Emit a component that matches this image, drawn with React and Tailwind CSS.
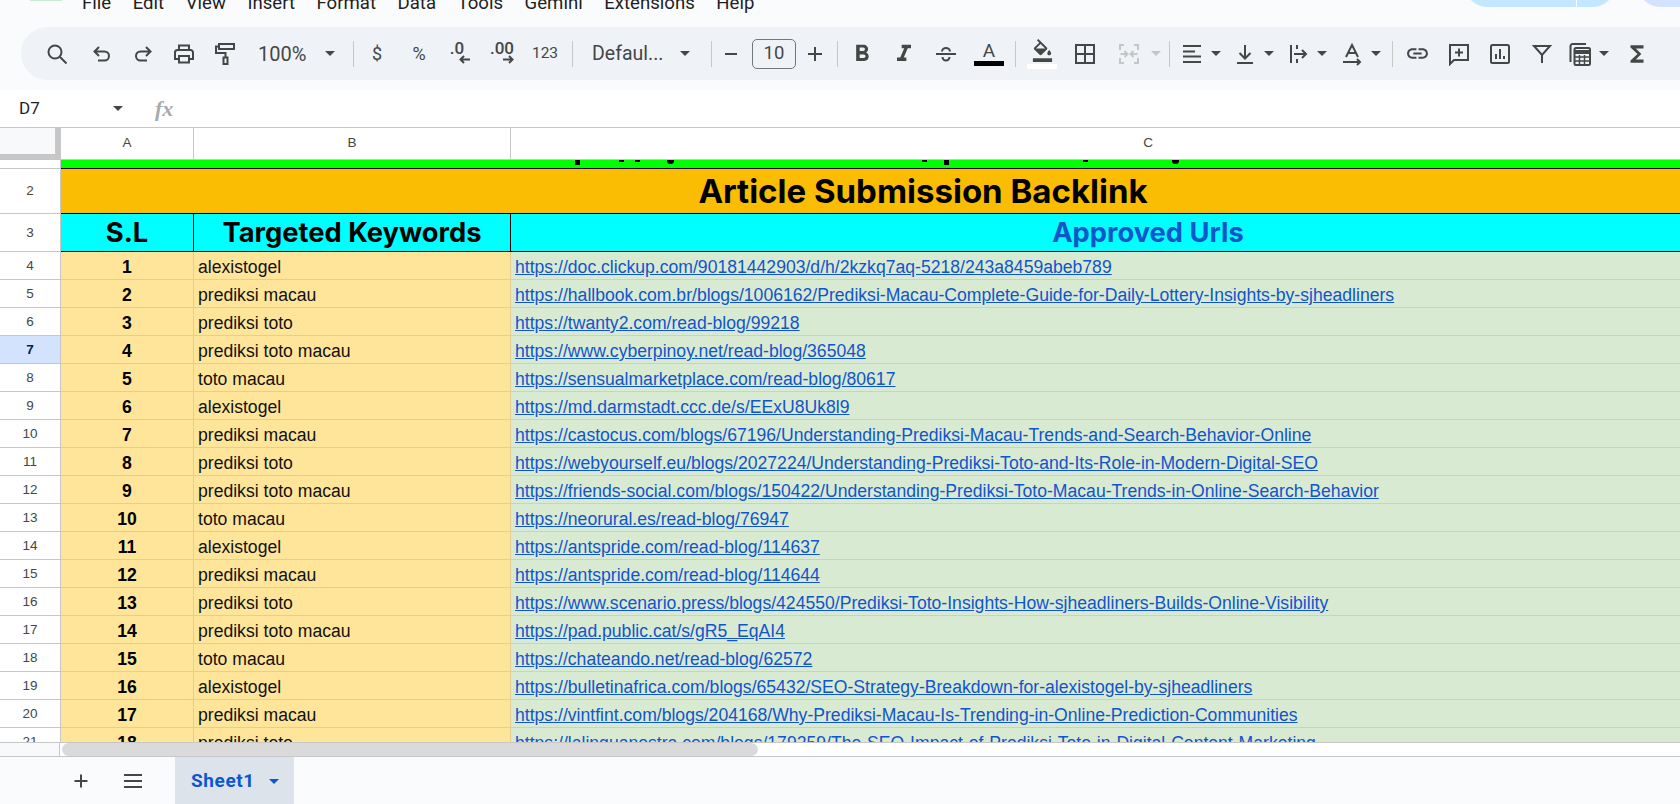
import { MdFormatBold, MdFormatItalic, MdOutlineFormatColorFill, MdLink, MdFunctions } from 'react-icons/md'

const MENU = ['File', 'Edit', 'View', 'Insert', 'Format', 'Data', 'Tools', 'Gemini', 'Extensions', 'Help']

const ROWS = [
  ['alexistogel', 'https://doc.clickup.com/90181442903/d/h/2kzkq7aq-5218/243a8459abeb789'],
  ['prediksi macau', 'https://hallbook.com.br/blogs/1006162/Prediksi-Macau-Complete-Guide-for-Daily-Lottery-Insights-by-sjheadliners'],
  ['prediksi toto', 'https://twanty2.com/read-blog/99218'],
  ['prediksi toto macau', 'https://www.cyberpinoy.net/read-blog/365048'],
  ['toto macau', 'https://sensualmarketplace.com/read-blog/80617'],
  ['alexistogel', 'https://md.darmstadt.ccc.de/s/EExU8Uk8l9'],
  ['prediksi macau', 'https://castocus.com/blogs/67196/Understanding-Prediksi-Macau-Trends-and-Search-Behavior-Online'],
  ['prediksi toto', 'https://webyourself.eu/blogs/2027224/Understanding-Prediksi-Toto-and-Its-Role-in-Modern-Digital-SEO'],
  ['prediksi toto macau', 'https://friends-social.com/blogs/150422/Understanding-Prediksi-Toto-Macau-Trends-in-Online-Search-Behavior'],
  ['toto macau', 'https://neorural.es/read-blog/76947'],
  ['alexistogel', 'https://antspride.com/read-blog/114637'],
  ['prediksi macau', 'https://antspride.com/read-blog/114644'],
  ['prediksi toto', 'https://www.scenario.press/blogs/424550/Prediksi-Toto-Insights-How-sjheadliners-Builds-Online-Visibility'],
  ['prediksi toto macau', 'https://pad.public.cat/s/gR5_EqAI4'],
  ['toto macau', 'https://chateando.net/read-blog/62572'],
  ['alexistogel', 'https://bulletinafrica.com/blogs/65432/SEO-Strategy-Breakdown-for-alexistogel-by-sjheadliners'],
  ['prediksi macau', 'https://vintfint.com/blogs/204168/Why-Prediksi-Macau-Is-Trending-in-Online-Prediction-Communities'],
  ['prediksi toto', 'https://lalinguanostra.com/blogs/179259/The-SEO-Impact-of-Prediksi-Toto-in-Digital-Content-Marketing'],
]

// what is left of row 1's text: the row is scrolled away, only descenders show
const DESCENDERS = [
  'left-[514px] w-[5px] h-[5px]',
  'left-[558px] w-[5px] h-[2px]',
  'left-[574px] w-[5px] h-[2px]',
  'left-[606px] w-[7px] h-[4px] rounded-b-full',
  'left-[861px] w-[5px] h-[2px]',
  'left-[883px] w-[5px] h-[5px]',
  'left-[1022px] w-[5px] h-[2px]',
  'left-[1111px] w-[7px] h-[4px] rounded-b-full',
]

const Ico = ({ children, size = 24, color = '#444746', width = 2 }) => (
  <svg width={size} height={size} viewBox="0 0 24 24" fill="none" stroke={color} strokeWidth={width}>
    {children}
  </svg>
)

const Caret = ({ className = '', color = '#444746' }) => (
  <svg className={`shrink-0 ${className}`} width="10" height="5" viewBox="0 0 10 5" fill={color}>
    <path d="M0 0h10L5 5z" />
  </svg>
)

const Slot = ({ className = '', children }) => (
  <div className={`h-full flex items-center justify-center shrink-0 ${className}`}>{children}</div>
)

const Divider = ({ className = '' }) => <div className={`w-px h-[26px] bg-[#c7c7c7] shrink-0 ${className}`} />

function Toolbar() {
  return (
    <div className="ml-[21px] h-[53px] bg-[#eff3f8] rounded-l-[27px] flex items-center pl-[15px] text-[#444746] font-['Roboto',sans-serif]">
      <Slot className="w-[42px]">
        <Ico><circle cx="10" cy="10" r="6.5" /><path d="M15 15l6.5 6.5" /></Ico>
      </Slot>
      <Slot className="w-[48px]">
        <Ico><path d="M9 5L4.5 9.5 9 14M4.5 9.5h10a4.5 4.5 0 0 1 0 9H8" /></Ico>
      </Slot>
      <Slot className="w-[34px]">
        <Ico><path d="M15 5l4.5 4.5L15 14M19.5 9.5h-10a4.5 4.5 0 0 0 0 9H16" /></Ico>
      </Slot>
      <Slot className="w-[48px]">
        <Ico>
          <path d="M7 8V3.5h10V8M7 17H3V10.5A2.5 2.5 0 0 1 5.5 8h13a2.5 2.5 0 0 1 2.5 2.5V17h-4" />
          <path d="M7 14h10v6.5H7z" />
        </Ico>
      </Slot>
      <Slot className="w-[34px]">
        <Ico><path d="M6 2h15v5H6zM6 4.5H3V11h9.5v4M10.5 15.5h4V22h-4z" /></Ico>
      </Slot>
      <Slot className="w-[111px] !justify-between pl-[16px] pr-[18px] text-[20px]">
        <span>100%</span>
        <Caret />
      </Slot>
      <Divider />
      <Slot className="w-[46px] text-[18px]">$</Slot>
      <Slot className="w-[38px] text-[18px]">%</Slot>
      <Slot className="w-[44px]">
        <div className="flex flex-col items-end -mt-[4px]">
          <span className="text-[17px] leading-[16px] font-medium pr-[6px]">.0</span>
          <svg width="11" height="9" viewBox="0 0 11 9" fill="none" stroke="#444746" strokeWidth="2" className="-mt-[1px]"><path d="M11 4.5H1M5 1L1.5 4.5 5 8" /></svg>
        </div>
      </Slot>
      <Slot className="w-[40px]">
        <div className="flex flex-col items-end -mt-[4px]">
          <span className="text-[17px] leading-[16px] font-medium">.00</span>
          <svg width="11" height="9" viewBox="0 0 11 9" fill="none" stroke="#444746" strokeWidth="2" className="-mt-[1px]"><path d="M0 4.5h10M6 1l3.5 3.5L6 8" /></svg>
        </div>
      </Slot>
      <Slot className="w-[46px] text-[15.5px]">123</Slot>
      <Divider className="ml-[4px]" />
      <Slot className="w-[138px] !justify-between pl-[19px] pr-[21px] text-[19.5px]">
        <span>Defaul...</span>
        <Caret />
      </Slot>
      <Divider />
      <Slot className="w-[38px]"><Ico><path d="M6 12h12" /></Ico></Slot>
      <div className="w-[44px] h-[30px] ml-[2px] shrink-0 rounded-[5px] border border-[#747775] flex items-center justify-center text-[18.5px]">10</div>
      <Slot className="w-[38px]"><Ico><path d="M5 12h14M12 5v14" /></Ico></Slot>
      <Divider className="ml-[3px]" />
      <Slot className="w-[48px]"><MdFormatBold size={28} color="#444746" /></Slot>
      <Slot className="w-[36px]"><MdFormatItalic size={28} color="#444746" /></Slot>
      <Slot className="w-[48px]">
        <Ico><path d="M2 12h20M8 9.5a4 3.5 0 0 1 8 0M8.5 15a3.5 3.5 0 0 0 7 0" /></Ico>
      </Slot>
      <Slot className="w-[38px]">
        <div className="flex flex-col items-center">
          <span className="text-[19px] leading-[19px] h-[20px]">A</span>
          <div className="w-[30px] h-[5px] bg-black" />
        </div>
      </Slot>
      <Divider className="ml-[7px]" />
      <Slot className="w-[52px]">
        <div className="flex flex-col items-center">
          <MdOutlineFormatColorFill size={23} color="#444746" className="mb-[2px]" />
          <div className="w-[30px] h-[5px] bg-white" />
        </div>
      </Slot>
      <Slot className="w-[34px]"><Ico><path d="M3 3h18v18H3zM12 3v18M3 12h18" /></Ico></Slot>
      <Slot className="w-[54px]">
        <Ico color="#c4c7c5">
          <path d="M7 3H3v5M3 16v5h4M17 3h4v5M21 16v5h-4M3.5 12H10M7.5 9l3 3-3 3M20.5 12H14M16.5 9l-3 3 3 3" />
        </Ico>
      </Slot>
      <Caret color="#c4c7c5" className="-ml-[5px]" />
      <div className="w-[8px] shrink-0" />
      <Divider />
      <Slot className="w-[44px]"><Ico><path d="M3 4h18M3 9.5h12M3 14.5h18M3 20h18" /></Ico></Slot>
      <Caret className="-ml-[3px]" />
      <Slot className="w-[48px]"><Ico><path d="M12 3v13M6.5 11l5.5 5.5 5.5-5.5M4 21h16" /></Ico></Slot>
      <Caret className="-ml-[5px]" />
      <Slot className="w-[48px]"><Ico><path d="M5 3v18M11 3v4M11 17v4M8 12h12M16 8l4 4-4 4" /></Ico></Slot>
      <Caret className="-ml-[5px]" />
      <Slot className="w-[50px]"><Ico><path d="M6 15l6-12 6 12M8 11h8M3 20h17M17 17l3 3-3 3" /></Ico></Slot>
      <Caret className="-ml-[6px]" />
      <Divider className="ml-[11px]" />
      <Slot className="w-[48px]"><MdLink size={25} color="#444746" /></Slot>
      <Slot className="w-[36px]"><Ico><path d="M3 3h18v15H7l-4 4zM12 6.5v8M8 10.5h8" /></Ico></Slot>
      <Slot className="w-[46px]"><Ico><rect x="3" y="3" width="18" height="18" rx="1.5" /><path d="M8 12v5M12 7v10M16 14v3" /></Ico></Slot>
      <Slot className="w-[38px]"><Ico><path d="M4 4h16l-8 9zM12 13v8" /></Ico></Slot>
      <Slot className="w-[38px]">
        <Ico><path d="M2.5 20V4a2 2 0 0 1 2-2H18" /><rect x="6.5" y="6" width="15.5" height="17" rx="1.5" /><path d="M7 9h14v2H7z" fill="#444746" /><path d="M11.5 13v10M16.5 13v10M7 15h14M7 19h14" strokeWidth="1.5" /></Ico>
      </Slot>
      <Caret />
      <Slot className="w-[56px]"><MdFunctions size={26} color="#444746" /></Slot>
    </div>
  )
}

const GRID = 'grid grid-cols-[61px_133px_317px_1274px]'
const RowNo = ({ n, active, className = '' }) => (
  <div className={`border-r border-b border-[#c7c7c7] flex items-center justify-center text-[13.5px] leading-none font-['Liberation_Sans',sans-serif] ${active ? 'bg-[#d3e3fd] text-[#041e49] font-bold' : 'bg-white text-[#444746] font-normal'} ${className}`}>
    {n}
  </div>
)

function Sheet() {
  return (
    <div className="flex-1 min-h-0 overflow-hidden bg-white font-['Liberation_Sans',Arial,sans-serif]">
      <div className="w-[1785px]">
        {/* column letters */}
        <div className={`${GRID} h-[33px] border-y border-[#c7c7c7] text-[13.5px] text-[#444746]`}>
          <div className="bg-[#f8f9fa] border-r-[6px] border-b-[5px] border-[#c7c7c7]" />
          <div className="flex items-center justify-center border-r border-[#c7c7c7]">A</div>
          <div className="flex items-center justify-center border-r border-[#c7c7c7]">B</div>
          <div className="flex items-center justify-center">C</div>
        </div>

        {/* row 1, nearly scrolled off */}
        <div className={`${GRID} h-[9px]`}>
          <RowNo n="" />
          <div className="col-span-3 relative bg-[#00ff00] border-b border-black overflow-hidden">
            {DESCENDERS.map((d) => <span key={d} className={`absolute top-0 bg-black ${d}`} />)}
          </div>
        </div>

        <div className={`${GRID} h-[45px]`}>
          <RowNo n="2" />
          <div className="col-span-3 bg-[#fbbc04] border-b border-black flex items-center justify-center font-['Inter',sans-serif] font-bold text-[33px] leading-none text-black">
            Article Submission Backlink
          </div>
        </div>

        <div className={`${GRID} h-[38px] font-['Inter',sans-serif] font-bold text-[27.3px] leading-none`}>
          <RowNo n="3" />
          <div className="bg-[#00ffff] border-b border-r border-black flex items-center justify-center pt-[1px] text-black">S.L</div>
          <div className="bg-[#00ffff] border-b border-r border-black flex items-center justify-center pt-[1px] text-black">Targeted Keywords</div>
          <div className="bg-[#00ffff] border-b border-black flex items-center justify-center pt-[1px] text-[#1155cc]">Approved Urls</div>
        </div>

        {ROWS.map(([keyword, url], i) => (
          <div key={i} className={`${GRID} grid-rows-[28px] h-[28px] text-[17.6px] leading-[28px]`}>
            <RowNo n={i + 4} active={i === 3} />
            <div className="bg-[#ffe599] border-b border-r border-[#e6cf8c] pt-[1px] text-center font-bold text-black">{i + 1}</div>
            <div className="bg-[#ffe599] border-b border-r border-[#e6cf8c] pl-[4px] pt-[1px] text-[#111]">{keyword}</div>
            <div className="bg-[#d9ead3] border-b border-[#c5d6bf] pl-[4px] pt-[1px]">
              <a className="text-[#1155cc] underline">{url}</a>
            </div>
          </div>
        ))}
      </div>
    </div>
  )
}

export default function App() {
  return (
    <div className="w-[1680px] h-[804px] overflow-hidden flex flex-col bg-[#f9fbfd]">
      {/* menu bar, page is scrolled so only the lower part shows */}
      <div className="h-[27px] shrink-0 flex items-start overflow-hidden font-['Roboto',sans-serif] text-[#1f1f1f]">
        <div className="w-[32px] h-[1px] ml-[30px] bg-[#c9ecd6]" />
        <div className="flex gap-[21.5px] ml-[20px] -mt-[7px] text-[18.6px] leading-[21px]">
          {MENU.map((m) => <span key={m}>{m}</span>)}
        </div>
        <div className="ml-auto flex items-start gap-[23px]">
          <div className="relative w-[150px] h-[7px] overflow-hidden">
            <div className="h-[44px] -mt-[37px] rounded-full bg-[#c2e7ff]" />
            <div className="absolute top-0 right-[38px] w-px h-full bg-white" />
          </div>
          <div className="w-[42px] h-[7px] overflow-hidden">
            <div className="w-[60px] h-[44px] -mt-[37px] rounded-full bg-[#d3e3fd]" />
          </div>
        </div>
      </div>

      <Toolbar />
      <div className="h-[10px] shrink-0" />

      {/* name box and formula bar */}
      <div className="h-[37px] shrink-0 bg-white flex items-center font-['Roboto',sans-serif] text-[#1f1f1f]">
        <span className="ml-[19px] w-[94px] text-[17px]">D7</span>
        <Caret />
        <span className="ml-[32px] font-['Liberation_Serif',serif] italic font-bold text-[22px] text-[#a8abae]">fx</span>
      </div>

      <Sheet />

      {/* horizontal scrollbar */}
      <div className="h-[14px] shrink-0 bg-white border-t border-[#c7c7c7] flex">
        <div className="w-[60px] bg-[#f8f9fa] border-r border-[#c7c7c7]" />
        <div className="ml-[2px] w-[696px] h-full rounded-full bg-[#dadada]" />
      </div>

      {/* sheet tabs */}
      <div className="h-[48px] shrink-0 border-t border-[#c7c7c7] flex items-stretch font-['Roboto',sans-serif]">
        <Slot className="w-[175px] gap-[28px] pl-[69px] !justify-start">
          <Ico><path d="M5.5 12h13M12 5.5v13" /></Ico>
          <Ico><path d="M3 6h18M3 12h18M3 18h18" /></Ico>
        </Slot>
        <div className="w-[119px] bg-[#dde3ea] flex items-center pl-[16px] pt-[2px] text-[#0b57d0] font-bold text-[19px] tracking-[0.6px]">
          <span>Sheet1</span>
          <Caret color="#0b57d0" className="ml-[14px]" />
        </div>
      </div>
    </div>
  )
}
